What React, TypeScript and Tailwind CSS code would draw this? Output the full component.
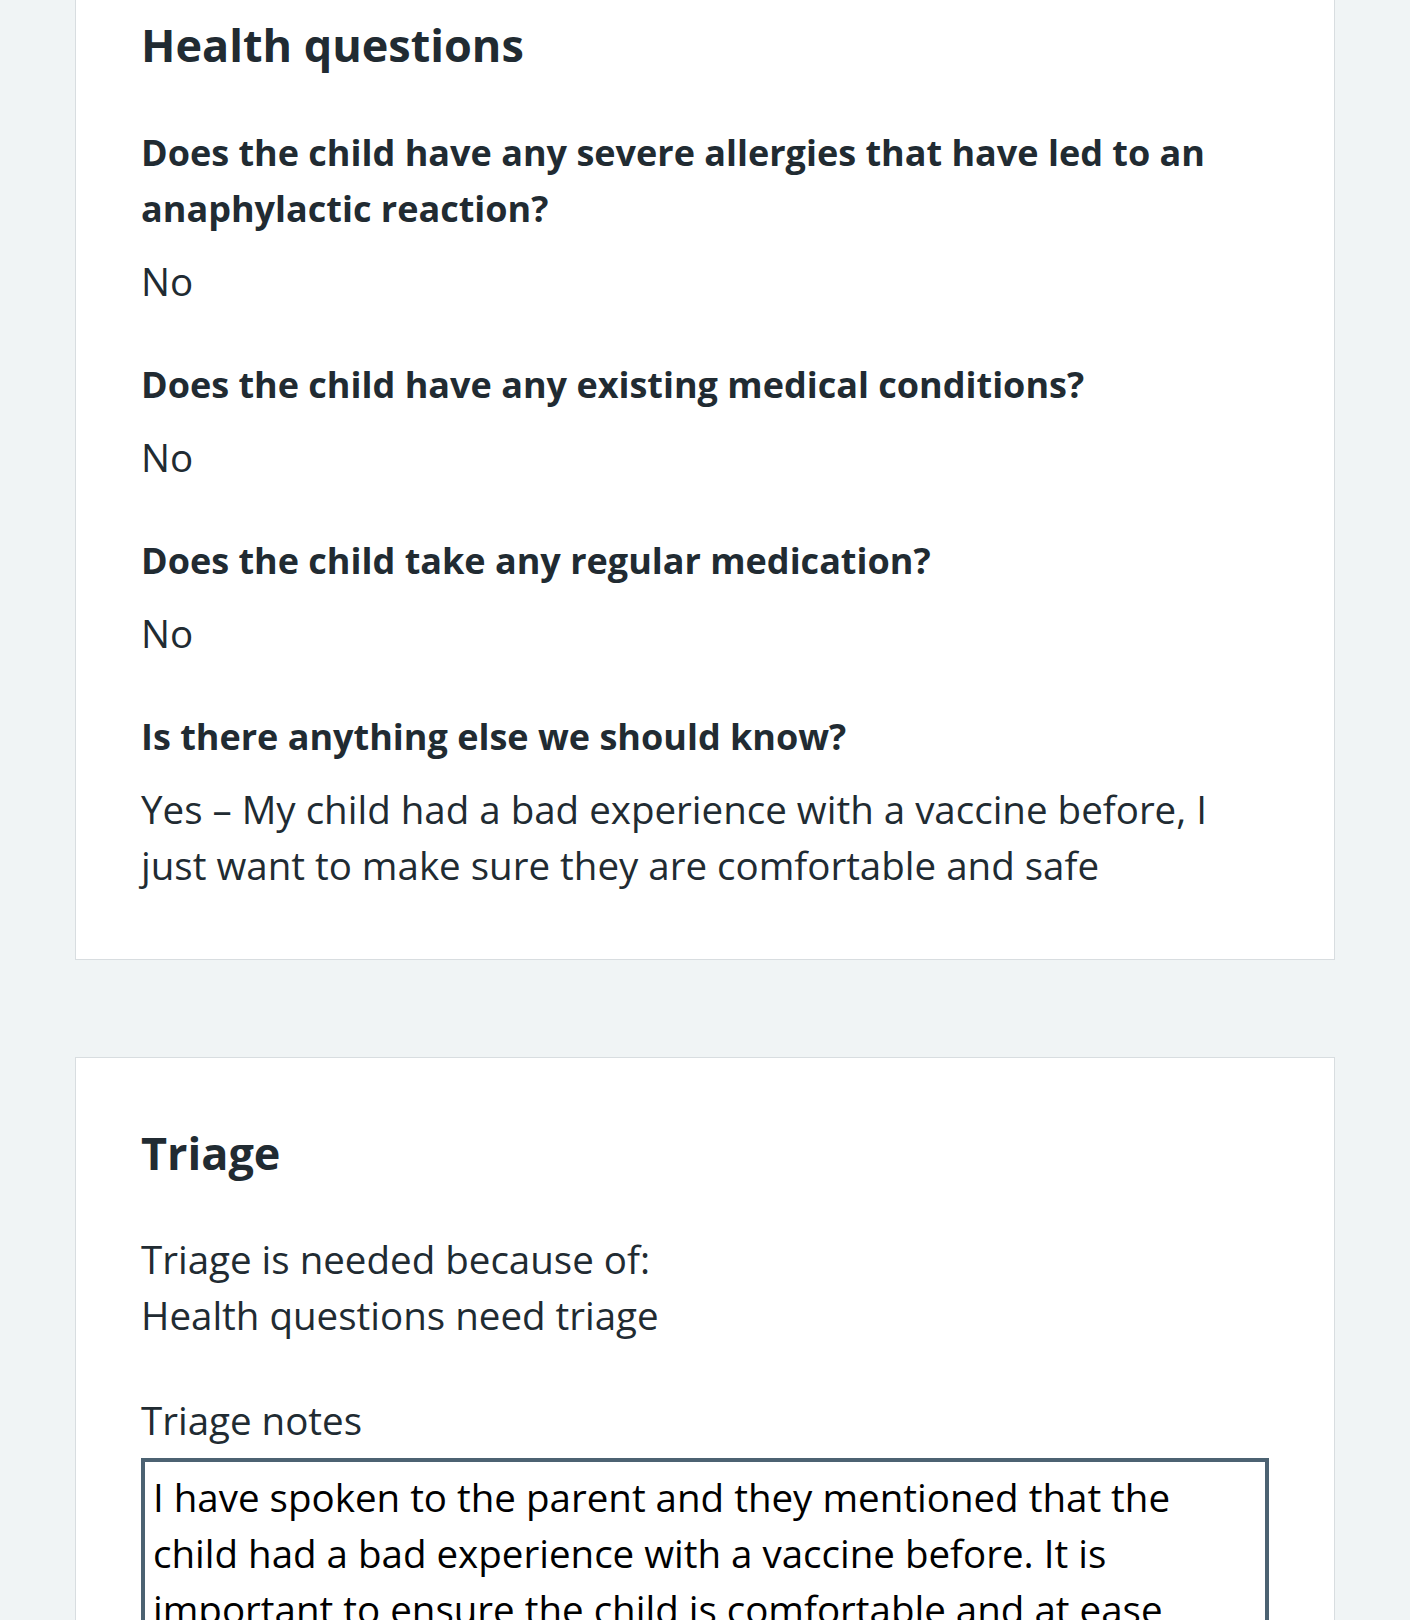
const questions = [
  {
    q: "Does the child have any severe allergies that have led to an anaphylactic reaction?",
    a: "No",
  },
  { q: "Does the child have any existing medical conditions?", a: "No" },
  { q: "Does the child take any regular medication?", a: "No" },
  {
    q: "Is there anything else we should know?",
    a: "Yes – My child had a bad experience with a vaccine before, I just want to make sure they are comfortable and safe",
  },
];

const font = { fontFamily: '"Open Sans", "Noto Sans", sans-serif' };

export default function App() {
  return (
    <div style={font} className="h-screen overflow-hidden bg-[#f0f4f5] px-[75px] text-[#212b32]">
      {/* Health questions card */}
      <section className="-mt-[52px] border border-[#d8dde0] bg-white pt-[64px] pr-[64px] pb-[66px] pl-[65px]">
        <h2 className="mb-12 text-[45px] font-bold leading-[64px]">Health questions</h2>
        <dl className="max-w-[1090px]">
          {questions.map((item, i) => (
            <div key={i} className={i < questions.length - 1 ? "mb-12" : ""}>
              <dt className="mb-4 text-[36px] font-bold leading-[56px]">{item.q}</dt>
              <dd className="text-[38.5px] leading-[56px]">{item.a}</dd>
            </div>
          ))}
        </dl>
      </section>

      {/* Triage card */}
      <section className="mt-[97px] border border-[#d8dde0] bg-white pt-[63px] pr-[65px] pb-[64px] pl-[65px]">
        <h2 className="mb-[46px] text-[45px] font-bold leading-[64px]">Triage</h2>
        <p className="mb-[49px] text-[38.5px] leading-[56px]">
          Triage is needed because of:
          <br />
          Health questions need triage
        </p>
        <label htmlFor="triage-notes" className="mb-[10px] block text-[38.5px] leading-[56px]">
          Triage notes
        </label>
        <textarea
          id="triage-notes"
          style={font}
          className="block h-[320px] w-full resize-none border-4 border-[#4c6272] bg-white pt-[7px] pr-[20px] pb-2 pl-2 text-[38.5px] leading-[56px] text-black outline-none"
          defaultValue="I have spoken to the parent and they mentioned that the child had a bad experience with a vaccine before. It is important to ensure the child is comfortable and at ease during the vaccination."
        />
      </section>
    </div>
  );
}
